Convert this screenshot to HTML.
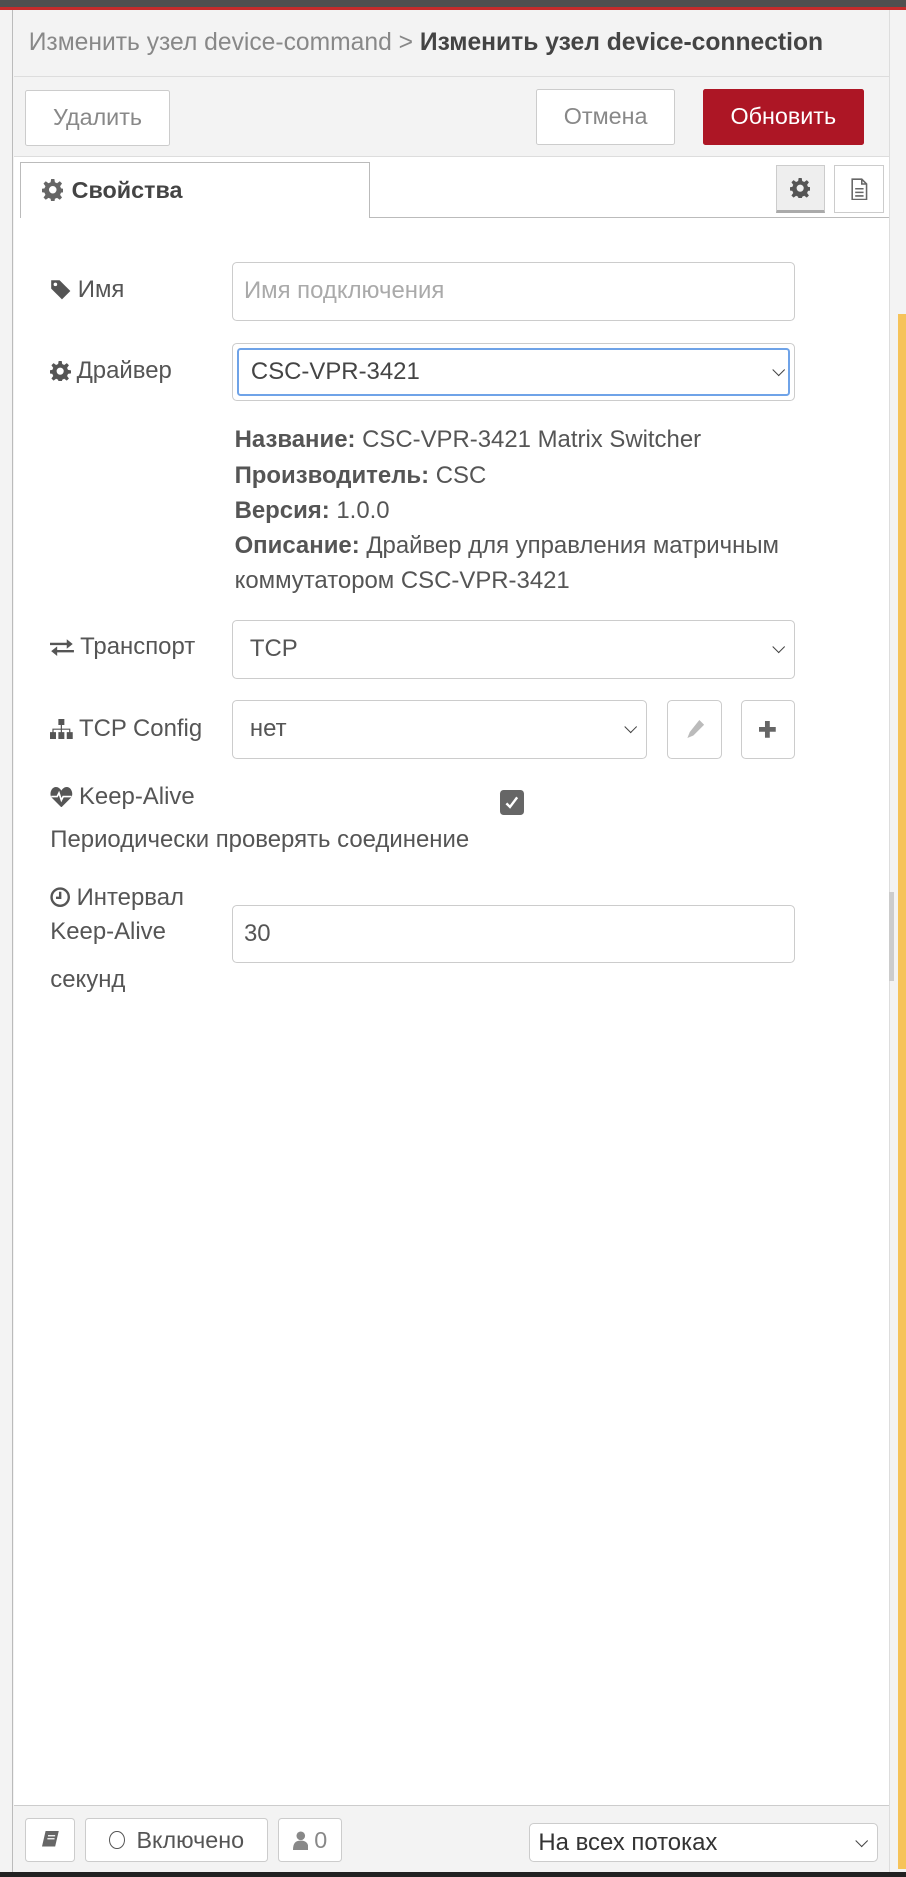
<!DOCTYPE html>
<html><head><meta charset="utf-8">
<style>
html{zoom:1.19683}
body{margin:0;width:757px;height:1568px;position:relative;overflow:hidden;background:#f3f3f3;font-family:"Liberation Sans",sans-serif;color:#555}
.a{position:absolute;box-sizing:border-box}
.btn{background:#fff;border:1px solid #ccc;border-radius:2px;display:flex;align-items:center;justify-content:center;font-size:19.5px;color:#888}
.inp{background:#fff;border:1px solid #ccc;border-radius:4px;font-size:20px;color:#555;display:flex;align-items:center;padding-left:14px}
.lbl{font-size:20px;color:#555;display:flex;align-items:center;gap:5px}
.chev{position:absolute;right:9px;top:50%;width:7px;height:7px;border-right:1.3px solid #444;border-bottom:1.3px solid #444;transform:translateY(-70%) rotate(45deg)}
.info{font-size:20px;color:#555;line-height:29.3px}
</style></head><body>
<div class="a" style="left:0;top:0;width:757px;height:6px;background:#4f4f4f"></div>
<div class="a" style="left:0;top:6px;width:757px;height:2px;background:#c52b2b"></div>
<div class="a" style="left:0;top:8px;width:11px;height:1560px;background:#f3f3f3;border-right:1px solid #bbb"></div>
<div class="a" style="left:743px;top:8px;width:14px;height:1560px;background:#f3f3f3;border-left:1px solid #ddd"></div>
<div class="a" style="left:750px;top:262px;width:7px;height:1300px;background:#f6c35a"></div>
<div class="a" style="left:743px;top:745px;width:4px;height:75px;background:#ccc"></div>
<div class="a" style="left:12px;top:8px;width:731px;height:56px;background:#f3f3f3;border-bottom:1px solid #ddd"></div>
<div class="a" style="left:24px;top:24px;font-size:20.6px;white-space:nowrap;color:#888">Изменить узел device-command &gt; <b style="color:#444">Изменить узел device-connection</b></div>
<div class="a btn" style="left:21px;top:75px;width:121px;height:47px">Удалить</div>
<div class="a btn" style="left:448px;top:74px;width:116px;height:47px">Отмена</div>
<div class="a btn" style="left:587px;top:74px;width:135px;height:47px;background:#ad1625;border-color:#ad1625;color:#fff">Обновить</div>
<div class="a" style="left:12px;top:130px;width:731px;height:1379px;background:#fff;border-top:1px solid #ddd;border-bottom:1px solid #ccc"></div>
<div class="a" style="left:17px;top:181px;width:726px;height:1px;background:#bbb"></div>
<div class="a" style="left:17px;top:135px;width:292px;height:47px;background:#fff;border:1px solid #bbb;border-bottom:none;font-size:19.5px;font-weight:bold;color:#444;display:flex;align-items:center;padding-left:17px;gap:7px">
<svg width="18" height="18" viewBox="0 0 20 20"><path fill="#666" d="M8.5 0h3l.5 3 2 .9 2.5-1.8 2.1 2.1-1.8 2.5.9 2 3 .5v3l-3 .5-.9 2 1.8 2.5-2.1 2.1-2.5-1.8-2 .9-.5 3h-3l-.5-3-2-.9-2.5 1.8-2.1-2.1 1.8-2.5-.9-2-3-.5v-3l3-.5.9-2-1.8-2.5 2.1-2.1 2.5 1.8 2-.9zM10 6.5a3.5 3.5 0 100 7 3.5 3.5 0 000-7z"/></svg>Свойства</div>
<div class="a" style="left:648px;top:138px;width:41px;height:40px;background:#eee;border:1px solid #ccc;border-bottom:3px solid #aaa;display:flex;align-items:center;justify-content:center">
<svg width="17" height="17" viewBox="0 0 20 20"><path fill="#555" d="M8.5 0h3l.5 3 2 .9 2.5-1.8 2.1 2.1-1.8 2.5.9 2 3 .5v3l-3 .5-.9 2 1.8 2.5-2.1 2.1-2.5-1.8-2 .9-.5 3h-3l-.5-3-2-.9-2.5 1.8-2.1-2.1 1.8-2.5-.9-2-3-.5v-3l3-.5.9-2-1.8-2.5 2.1-2.1 2.5 1.8 2-.9zM10 6.5a3.5 3.5 0 100 7 3.5 3.5 0 000-7z"/></svg></div>
<div class="a" style="left:697px;top:138px;width:42px;height:40px;background:#fff;border:1px solid #ccc;display:flex;align-items:center;justify-content:center">
<svg width="14" height="19" viewBox="0 0 14 19"><path fill="none" stroke="#666" stroke-width="1.3" d="M1 1h8l4 4v13H1z M9 1v4h4 M3.5 9h7 M3.5 12h7 M3.5 15h7"/></svg></div>

<div class="a lbl" style="left:42px;top:229px;height:26px"><svg width="18" height="18" viewBox="0 0 18 18"><path fill="#555" d="M1 1h7l9 9-7 7-9-9z"/><circle cx="4.5" cy="4.5" r="1.5" fill="#fff"/></svg>Имя</div>
<div class="a inp" style="left:194px;top:219px;width:470px;height:49px;padding-left:9px;color:#aaa">Имя подключения</div>

<div class="a lbl" style="left:42px;top:297px;height:26px"><svg width="17" height="17" viewBox="0 0 20 20"><path fill="#555" d="M8.5 0h3l.5 3 2 .9 2.5-1.8 2.1 2.1-1.8 2.5.9 2 3 .5v3l-3 .5-.9 2 1.8 2.5-2.1 2.1-2.5-1.8-2 .9-.5 3h-3l-.5-3-2-.9-2.5 1.8-2.1-2.1 1.8-2.5-.9-2-3-.5v-3l3-.5.9-2-1.8-2.5 2.1-2.1 2.5 1.8 2-.9zM10 6.5a3.5 3.5 0 100 7 3.5 3.5 0 000-7z"/></svg>Драйвер</div>
<div class="a" style="left:194px;top:287px;width:470px;height:48px;border:1px solid #ccc;border-radius:4px;background:#fff"></div>
<div class="a inp" style="left:198px;top:291px;width:462px;height:40px;border:2px solid #6fa3e8;border-radius:3px;padding-left:10px;color:#444">CSC-VPR-3421<span class="chev" style="right:4px"></span></div>

<div class="a info" style="left:196px;top:353px;width:490px">
<b>Название:</b> CSC-VPR-3421 Matrix Switcher<br><b>Производитель:</b> CSC<br><b>Версия:</b> 1.0.0<br><b>Описание:</b> Драйвер для управления матричным коммутатором CSC-VPR-3421</div>

<div class="a lbl" style="left:42px;top:528px;height:26px"><svg width="20" height="16" viewBox="0 0 20 16"><path fill="#555" d="M0 4h14V1l5 4-5 4V6H0z M20 10H6V7l-5 4 5 4v-3h14z"/></svg>Транспорт</div>
<div class="a inp" style="left:194px;top:518px;width:470px;height:49px">TCP<span class="chev"></span></div>

<div class="a lbl" style="left:42px;top:596px;height:26px"><svg width="19" height="17" viewBox="0 0 19 17"><path fill="#555" d="M7 0h5v5H7z M9 5h1v3h7v3h-1V9h-6v2H9V9H3v2H2V8h7z M0 11h5v6H0z M7 11h5v6H7z M14 11h5v6h-5z"/></svg>TCP Config</div>
<div class="a inp" style="left:194px;top:585px;width:347px;height:49px">нет<span class="chev"></span></div>
<div class="a btn" style="left:557px;top:585px;width:46px;height:49px;border-radius:4px"><svg width="16" height="16" viewBox="0 0 16 16"><path fill="#bbb" d="M12 0l4 4-9 9-5 2 2-5z"/></svg></div>
<div class="a btn" style="left:619px;top:585px;width:45px;height:49px;border-radius:4px"><svg width="14" height="14" viewBox="0 0 14 14"><path fill="#666" d="M5 0h4v5h5v4H9v5H5V9H0V5h5z"/></svg></div>

<div class="a lbl" style="left:42px;top:653px;height:26px"><svg width="19" height="17" viewBox="0 0 19 17"><path fill="#555" d="M9.5 17L1.5 9C-1 6 1 0 5 0c2 0 3.5 1.5 4.5 3C10.5 1.5 12 0 14 0c4 0 6 6 3.5 9z"/><path fill="none" stroke="#fff" stroke-width="1.4" d="M1 8h5l1.5-3 2 6 1.5-3h7"/></svg>Keep-Alive</div>
<div class="a" style="left:418px;top:660px;width:20px;height:21px;background:#666;border-radius:3px;display:flex;align-items:center;justify-content:center"><svg width="13" height="13" viewBox="0 0 13 13"><path fill="none" stroke="#fff" stroke-width="2" d="M2 7l3 3 6-8"/></svg></div>
<div class="a" style="left:42px;top:690px;font-size:20px">Периодически проверять соединение</div>

<div class="a lbl" style="left:42px;top:737px;height:26px"><svg width="17" height="17" viewBox="0 0 17 17"><circle cx="8.5" cy="8.5" r="7.2" fill="none" stroke="#555" stroke-width="2"/><path fill="none" stroke="#555" stroke-width="2" d="M8.5 4v5H5"/></svg>Интервал</div>
<div class="a" style="left:42px;top:767px;font-size:20px">Keep-Alive</div>
<div class="a" style="left:42px;top:807px;font-size:20px">секунд</div>
<div class="a inp" style="left:194px;top:756px;width:470px;height:49px;padding-left:9px">30</div>

<div class="a btn" style="left:21px;top:1519px;width:42px;height:37px;border-radius:3px"><svg width="14" height="16" viewBox="0 0 14 16"><path fill="#666" d="M3 0h11l-3 13H0z"/><path fill="none" stroke="#fff" stroke-width="1" d="M5 4h6 M4.5 6.5h6"/></svg></div>
<div class="a btn" style="left:71px;top:1519px;width:153px;height:37px;border-radius:3px;font-size:19.5px;color:#555;gap:10px"><span style="width:13px;height:15px;border:1.5px solid #555;border-radius:50%;box-sizing:border-box"></span>Включено</div>
<div class="a btn" style="left:232px;top:1519px;width:54px;height:37px;border-radius:3px;font-size:19.5px;color:#888;gap:5px"><svg width="13" height="16" viewBox="0 0 13 16"><circle cx="6.5" cy="4" r="3.6" fill="#888"/><path fill="#888" d="M0 16c0-6 2-8 6.5-8S13 10 13 16z"/></svg>0</div>
<div class="a inp" style="left:442px;top:1523px;width:292px;height:33px;border-radius:4px;padding-left:7px;color:#333">На всех потоках<span class="chev"></span></div>
<div class="a" style="left:0;top:1564px;width:757px;height:4px;background:#222"></div>
</body></html>
